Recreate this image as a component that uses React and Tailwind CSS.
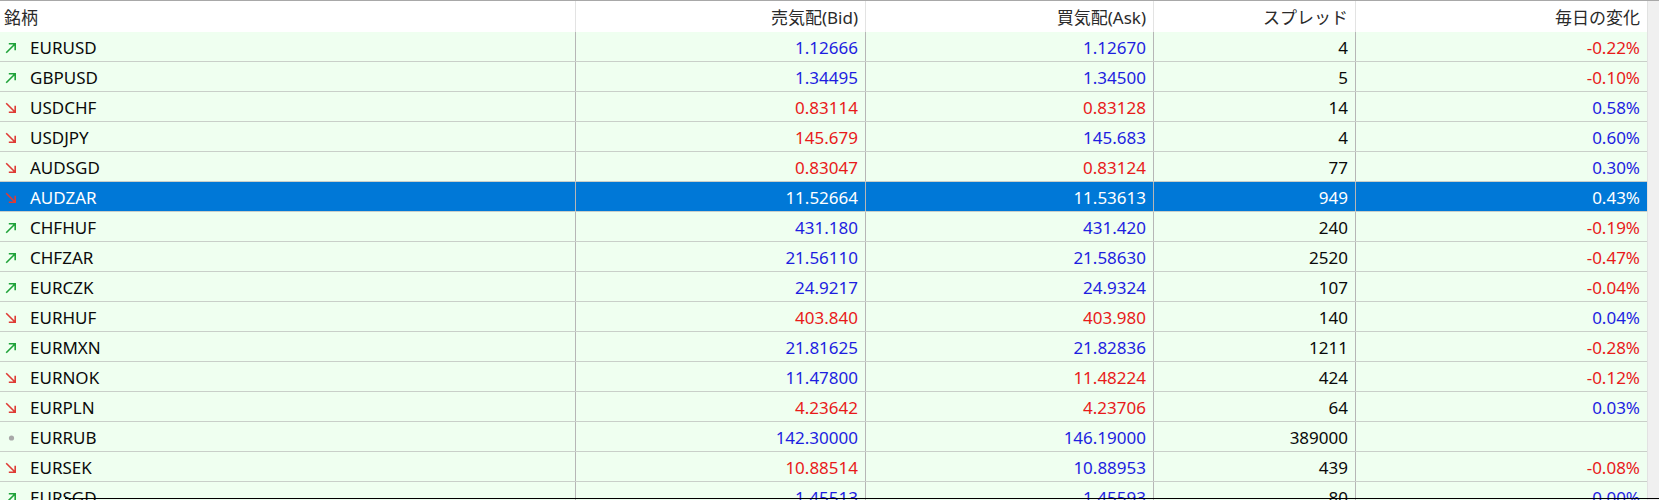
import React from "react";

const B = "text-[#1e1ee0]";
const R = "text-[#e81a1a]";
const K = "text-[#0a0a0a]";

const rows = [
  ["up", "EURUSD", "1.12666", B, "1.12670", B, "4", "-0.22%", R],
  ["up", "GBPUSD", "1.34495", B, "1.34500", B, "5", "-0.10%", R],
  ["down", "USDCHF", "0.83114", R, "0.83128", R, "14", "0.58%", B],
  ["down", "USDJPY", "145.679", R, "145.683", B, "4", "0.60%", B],
  ["down", "AUDSGD", "0.83047", R, "0.83124", R, "77", "0.30%", B],
  ["down", "AUDZAR", "11.52664", R, "11.53613", R, "949", "0.43%", B, true],
  ["up", "CHFHUF", "431.180", B, "431.420", B, "240", "-0.19%", R],
  ["up", "CHFZAR", "21.56110", B, "21.58630", B, "2520", "-0.47%", R],
  ["up", "EURCZK", "24.9217", B, "24.9324", B, "107", "-0.04%", R],
  ["down", "EURHUF", "403.840", R, "403.980", R, "140", "0.04%", B],
  ["up", "EURMXN", "21.81625", B, "21.82836", B, "1211", "-0.28%", R],
  ["down", "EURNOK", "11.47800", B, "11.48224", R, "424", "-0.12%", R],
  ["down", "EURPLN", "4.23642", R, "4.23706", R, "64", "0.03%", B],
  ["dot", "EURRUB", "142.30000", B, "146.19000", B, "389000", "", B],
  ["down", "EURSEK", "10.88514", R, "10.88953", B, "439", "-0.08%", R],
  ["up", "EURSGD", "1.45513", B, "1.45593", B, "80", "0.00%", B],
];

function Icon({ kind }) {
  if (kind === "up") {
    return (
      <svg width="12" height="12" viewBox="0 0 12 12" className="shrink-0">
        <path d="M1.2 10.8 L10.2 1.8 M3.8 1.8 H10.2 V8.2" fill="none" stroke="#1fa33a" strokeWidth="1.6" />
      </svg>
    );
  }
  if (kind === "down") {
    return (
      <svg width="12" height="12" viewBox="0 0 12 12" className="shrink-0">
        <path d="M1.2 1.2 L10.2 10.2 M3.8 10.2 H10.2 V3.8" fill="none" stroke="#de3b34" strokeWidth="1.6" />
      </svg>
    );
  }
  return (
    <svg width="12" height="12" viewBox="0 0 12 12" className="shrink-0">
      <circle cx="6.5" cy="6" r="2.6" fill="#a8a8a8" />
    </svg>
  );
}

const grid = "grid grid-cols-[576px_290px_288px_202px_291px]";

export default function App() {
  return (
    <div className="relative w-[1659px] h-[500px] overflow-hidden bg-white font-[family-name:'Noto_Sans','Noto_Sans_CJK_JP',sans-serif] text-[17px] leading-none">
      <div className="h-px bg-[#a8a8a8]" />
      <div className="flex">
        <div className="w-[1647px]">
          <div className={`${grid} h-[31px] bg-white text-[#2a2a2a]`}>
            <div className="flex items-center pl-[4px] pt-[2px] border-r border-[#e3e3e3]">銘柄</div>
            <div className="flex items-center justify-end pr-[7px] pt-[2px] border-r border-[#e3e3e3]">売気配(Bid)</div>
            <div className="flex items-center justify-end pr-[7px] pt-[2px] border-r border-[#e3e3e3]">買気配(Ask)</div>
            <div className="flex items-center justify-end pr-[7px] pt-[2px] border-r border-[#e3e3e3]">スプレッド</div>
            <div className="flex items-center justify-end pr-[7px] pt-[2px]">毎日の変化</div>
          </div>
          {rows.map((r) => {
            const [kind, sym, bid, bc, ask, ac, spread, chg, cc, sel] = r;
            const bg = sel ? "bg-[#0078d7]" : "bg-[#effff0]";
            const c = (col) => (sel ? "text-white" : col);
            return (
              <div key={sym} className={`${grid} h-[30px] border-b border-[#c9cfc9] ${bg}`}>
                <div className={`flex items-center gap-[13px] pl-[5px] pt-[2px] border-r border-[#b6b6b6] ${c(K)}`}>
                  <Icon kind={kind} />
                  <span>{sym}</span>
                </div>
                <div className={`flex items-center justify-end pr-[7px] pt-[2px] border-r border-[#b6b6b6] ${c(bc)}`}>{bid}</div>
                <div className={`flex items-center justify-end pr-[7px] pt-[2px] border-r border-[#b6b6b6] ${c(ac)}`}>{ask}</div>
                <div className={`flex items-center justify-end pr-[7px] pt-[2px] border-r border-[#b6b6b6] ${c(K)}`}>{spread}</div>
                <div className={`flex items-center justify-end pr-[7px] pt-[2px] ${c(cc)}`}>{chg}</div>
              </div>
            );
          })}
        </div>
        <div className="flex-1 bg-[#f0f0f0] border-l border-[#e2e2e2]" />
      </div>
      <div className="absolute left-[65px] right-0 top-[498px] h-px bg-black" />
    </div>
  );
}
